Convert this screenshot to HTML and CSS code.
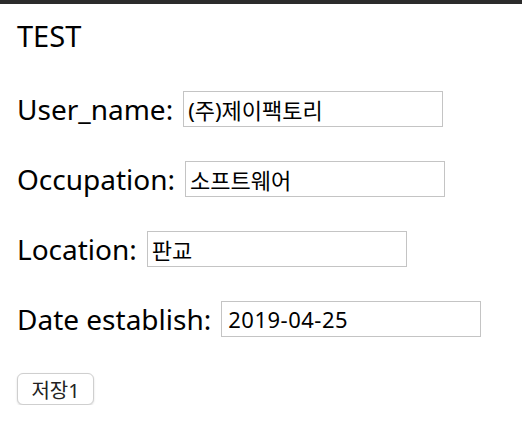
FILE: index.html
```html
<!DOCTYPE html>
<html lang="ko">
<head>
<meta charset="utf-8">
<link rel="stylesheet" href="styles.css">
</head>
<body>
<div class="topbar"></div>
<main class="page">
  <h1 class="title">TEST</h1>
  <form class="form">
    <div class="row"><label class="label">User_name:</label><input class="field" type="text" value="(주)제이팩토리"></div>
    <div class="row"><label class="label">Occupation:</label><input class="field" type="text" value="소프트웨어"></div>
    <div class="row"><label class="label">Location:</label><input class="field" type="text" value="판교"></div>
    <div class="row"><label class="label">Date establish:</label><input class="field date" type="text" value="2019-04-25"></div>
    <div class="actions"><button class="btn" type="button">저장1</button></div>
  </form>
</main>
</body>
</html>
```
FILE: styles.css
```css
* { box-sizing: border-box; }
html, body { margin: 0; padding: 0; background: #fff; }
body { font-family: "Noto Sans", "Noto Sans CJK KR", sans-serif; color: #000; }
.topbar { height: 4px; background: #2b2b2b; }
.page { padding: 0 17px; }
.title { margin: 0; padding-top: 14px; font-size: 29px; font-weight: 400; line-height: 36px; }
.form { display: flex; flex-direction: column; }
.row { display: flex; align-items: center; gap: 10px; margin-top: 34px; height: 36px; }
.row:first-child { margin-top: 37px; }
.label { font-size: 28px; line-height: 36px; }
.field { width: 260px; height: 36px; border: 1px solid #c4c4c4; padding: 0 4px; font-family: "Noto Sans", "Noto Sans CJK KR", sans-serif; font-size: 22px; color: #000; background: #fff; }
.date { font-size: 22px; padding-left: 6px; letter-spacing: 0.5px; }
.actions { margin-top: 36px; }
.btn { width: 77px; height: 32px; border: 1px solid #cfcfcf; border-radius: 6px; background: #fff; font-family: "Noto Sans", "Noto Sans CJK KR", sans-serif; font-size: 20px; color: #222; box-shadow: 0 1px 2px rgba(0,0,0,0.15); padding: 0; }
```
